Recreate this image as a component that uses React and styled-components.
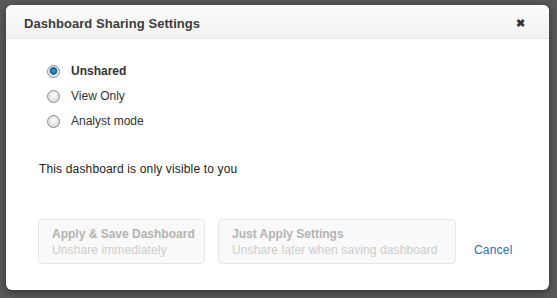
import React from "react";
import styled, { createGlobalStyle } from "styled-components";

const Global = createGlobalStyle`
  html, body { margin: 0; padding: 0; }
  body {
    background: #595959;
    font-family: "Liberation Sans", Arial, sans-serif;
    width: 557px; height: 298px; overflow: hidden;
  }
`;

const Overlay = styled.div`
  width: 557px;
  height: 298px;
  padding: 5px 0 0 6px;
  box-sizing: border-box;
`;

const Modal = styled.div`
  width: 543px;
  height: 285px;
  background: #fff;
  border-radius: 6px;
  box-shadow: 0 2px 8px rgba(0,0,0,0.45);
  display: flex;
  flex-direction: column;
  overflow: hidden;
`;

const Header = styled.div`
  height: 34px;
  box-sizing: border-box;
  display: flex;
  align-items: center;
  justify-content: space-between;
  padding: 3px 18px 0 18px;
  background: linear-gradient(#fcfcfc, #f2f2f2);
  border-bottom: 1px solid #e4e4e4;
  flex-shrink: 0;
`;

const Title = styled.h3`
  margin: 0;
  font-size: 13px;
  font-weight: bold;
  color: #3d3d3d;
  letter-spacing: 0.05px;
`;

const Close = styled.span`
  font-size: 11px;
  font-weight: bold;
  color: #333;
  line-height: 1;
  margin-right: 6px;
`;

const Body = styled.div`
  padding: 24px 0 0 33px;
  display: flex;
  flex-direction: column;
`;

const Options = styled.div`
  display: flex;
  flex-direction: column;
  gap: 9px;
  padding-left: 8px;
`;

const Option = styled.label`
  display: flex;
  align-items: center;
  gap: 11px;
  height: 16px;
  font-size: 12px;
  color: #333;
  font-weight: ${(p) => (p.$selected ? "bold" : "normal")};
`;

const Radio = styled.span`
  width: 13px;
  height: 13px;
  border-radius: 50%;
  box-sizing: border-box;
  border: 1px solid #8a8a8a;
  background: ${(p) =>
    p.$checked
      ? "radial-gradient(circle at 50% 45%, #4a9bd0 0, #1d5f93 3px, #2a6e9c 3.5px, #dfe9f1 4.2px, #f3f3f3 100%)"
      : "radial-gradient(circle at 50% 40%, #fdfdfd 0, #e8e8e8 4px, #d0d0d0 100%)"};
`;

const Info = styled.p`
  margin: 33px 0 0 0;
  font-size: 12px;
  color: #222;
  letter-spacing: 0.15px;
`;

const Footer = styled.div`
  display: flex;
  align-items: center;
  gap: 13px;
  margin-top: 43px;
  padding-left: 32px;
`;

const ActionButton = styled.div`
  width: ${(p) => p.$w}px;
  height: 45px;
  box-sizing: border-box;
  border: 1px solid #e6e6e6;
  border-radius: 4px;
  background: #f9f9f9;
  padding: 7px 0 0 13px;
  display: flex;
  flex-direction: column;
  gap: 2px;
`;

const BtnTitle = styled.span`
  font-size: 12px;
  font-weight: bold;
  color: #b3b3b3;
`;

const BtnSub = styled.span`
  font-size: 12px;
  color: #cccccc;
  letter-spacing: 0.1px;
`;

const Cancel = styled.a`
  font-size: 12px;
  color: #2b6db5;
  margin-left: 5px;
  margin-top: 17px;
  letter-spacing: 0.2px;
  text-decoration: none;
`;

export default function App() {
  return (
    <>
      <Global />
      <Overlay>
        <Modal>
          <Header>
            <Title>Dashboard Sharing Settings</Title>
            <Close>✖</Close>
          </Header>
          <Body>
            <Options>
              <Option $selected>
                <Radio $checked />
                Unshared
              </Option>
              <Option>
                <Radio />
                View Only
              </Option>
              <Option>
                <Radio />
                Analyst mode
              </Option>
            </Options>
            <Info>This dashboard is only visible to you</Info>
          </Body>
          <Footer>
            <ActionButton $w={167}>
              <BtnTitle>Apply &amp; Save Dashboard</BtnTitle>
              <BtnSub>Unshare immediately</BtnSub>
            </ActionButton>
            <ActionButton $w={238}>
              <BtnTitle>Just Apply Settings</BtnTitle>
              <BtnSub>Unshare later when saving dashboard</BtnSub>
            </ActionButton>
            <Cancel href="#">Cancel</Cancel>
          </Footer>
        </Modal>
      </Overlay>
    </>
  );
}
